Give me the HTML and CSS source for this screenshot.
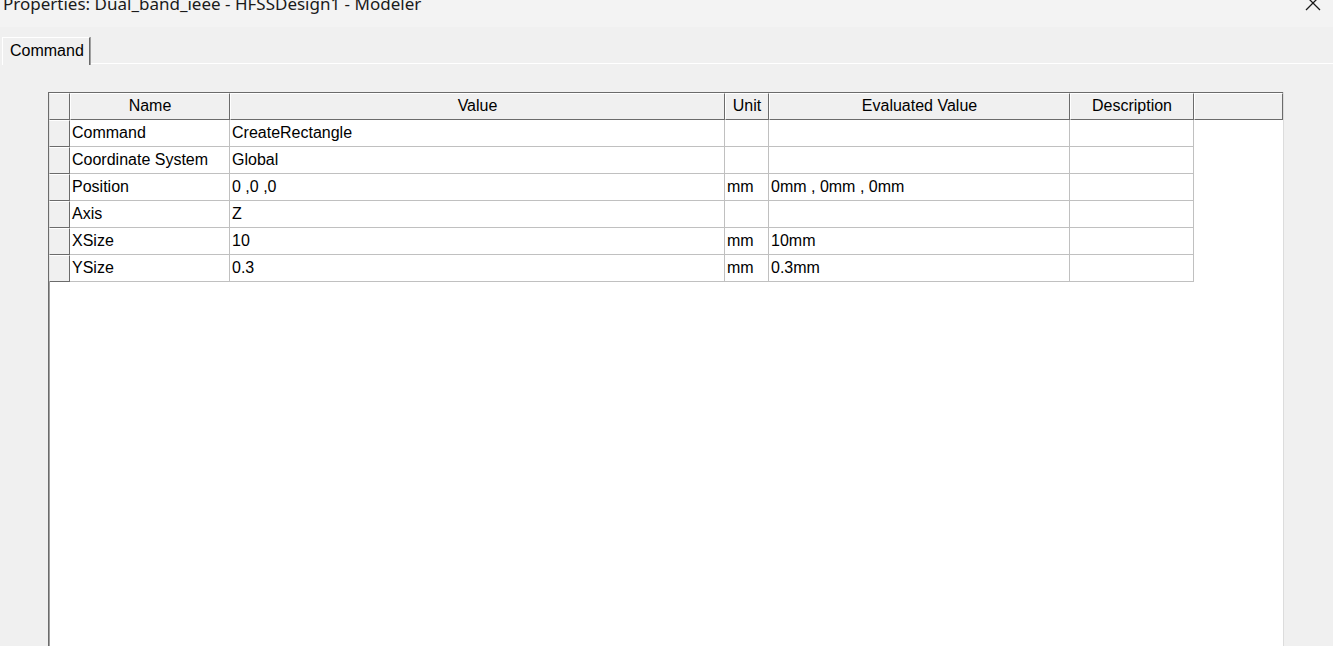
FILE: index.html
```html
<!DOCTYPE html>
<html>
<head>
<meta charset="utf-8">
<link rel="stylesheet" href="styles.css">
</head>
<body>
<div class="titlebar">
  <span class="title">Properties: Dual_band_ieee - HFSSDesign1 - Modeler</span>
  <svg class="close" width="16" height="16" viewBox="0 0 16 16"><path d="M1 -4 L15 10 M15 -4 L1 10" stroke="#1a1a1a" stroke-width="1.3" fill="none"/></svg>
</div>
<div class="tabstrip">
  <div class="tab">Command</div>
  <div class="tabline"></div>
</div>
<div class="panel">
  <div class="grid">
    <div class="hrow">
      <div class="hc c0"></div>
      <div class="hc c1">Name</div>
      <div class="hc c2">Value</div>
      <div class="hc c3">Unit</div>
      <div class="hc c4">Evaluated Value</div>
      <div class="hc c5">Description</div>
      <div class="hc c6"></div>
    </div>
    <div class="row"><div class="rh"></div><div class="dc c1">Command</div><div class="dc c2">CreateRectangle</div><div class="dc c3"></div><div class="dc c4"></div><div class="dc c5"></div></div>
    <div class="row"><div class="rh"></div><div class="dc c1">Coordinate System</div><div class="dc c2">Global</div><div class="dc c3"></div><div class="dc c4"></div><div class="dc c5"></div></div>
    <div class="row"><div class="rh"></div><div class="dc c1">Position</div><div class="dc c2">0 ,0 ,0</div><div class="dc c3">mm</div><div class="dc c4">0mm , 0mm , 0mm</div><div class="dc c5"></div></div>
    <div class="row"><div class="rh"></div><div class="dc c1">Axis</div><div class="dc c2">Z</div><div class="dc c3"></div><div class="dc c4"></div><div class="dc c5"></div></div>
    <div class="row"><div class="rh"></div><div class="dc c1">XSize</div><div class="dc c2">10</div><div class="dc c3">mm</div><div class="dc c4">10mm</div><div class="dc c5"></div></div>
    <div class="row"><div class="rh"></div><div class="dc c1">YSize</div><div class="dc c2">0.3</div><div class="dc c3">mm</div><div class="dc c4">0.3mm</div><div class="dc c5"></div></div>
  </div>
</div>
</body>
</html>
```
FILE: styles.css
```css
html, body {
  margin: 0;
  padding: 0;
  height: 100%;
  overflow: hidden;
}
body {
  background: #f0f0f0;
  font-family: "Liberation Sans", Arial, sans-serif;
  font-size: 16px;
  color: #000;
}
.titlebar {
  height: 27px;
  background: #f3f3f3;
  position: relative;
  overflow: hidden;
}
.title {
  display: block;
  font-family: "Noto Sans", "Open Sans", sans-serif;
  font-size: 17px;
  color: #1a1a1a;
  line-height: 22px;
  margin-top: -7px;
  padding-left: 3px;
}
.close {
  position: absolute;
  left: 1305px;
  top: 0;
}
.tabstrip {
  height: 38px;
  display: flex;
  align-items: flex-end;
  padding-left: 2px;
}
.tab {
  height: 28px;
  box-sizing: border-box;
  width: 88px;
  border-top: 1px solid #fff;
  border-left: 1px solid #fff;
  border-right: 1px solid #696969;
  box-shadow: 1px 0 0 #a0a0a0;
  padding: 4px 0 0 7px;
  background: #f0f0f0;
}
.tabline {
  flex: 1;
  height: 1px;
  margin-bottom: 1px;
  background: #fff;
  margin-left: 1px;
}
.panel {
  padding: 27px 0 0 48px;
  height: 554px;
}
.grid {
  width: 1234px;
  height: 554px;
  background: #fff;
  border-left: 1px solid #6b6b6b;
  border-right: 1px solid #dcdcdc;
  box-shadow: inset 1px 0 0 #a0a0a0;
}
.hrow {
  display: flex;
  border-top: 1px solid #6b6b6b;
  background: #f0f0f0;
  width: 1234px;
}
.hc {
  box-sizing: border-box;
  height: 27px;
  border-top: 1px solid #fff;
  border-left: 1px solid #fff;
  border-right: 1px solid #6b6b6b;
  border-bottom: 1px solid #6b6b6b;
  text-align: center;
  line-height: 23px;
  background: #f0f0f0;
}
.hc.c0 { border-left-color: #e3e3e3; }
.c0 { width: 21px; }
.c1 { width: 160px; }
.c2 { width: 495px; }
.c3 { width: 44px; }
.c4 { width: 301px; }
.c5 { width: 124px; }
.c6 { width: 89px; }
.row {
  display: flex;
  height: 27px;
}
.rh {
  box-sizing: border-box;
  width: 21px;
  height: 27px;
  background: #f0f0f0;
  border-top: 1px solid #fff;
  border-left: 1px solid #e3e3e3;
  border-right: 1px solid #6b6b6b;
  border-bottom: 1px solid #6b6b6b;
}
.dc {
  box-sizing: border-box;
  height: 27px;
  border-right: 1px solid #c0c0c0;
  border-bottom: 1px solid #c0c0c0;
  padding-left: 2px;
  line-height: 26px;
  white-space: nowrap;
  overflow: hidden;
}
```
